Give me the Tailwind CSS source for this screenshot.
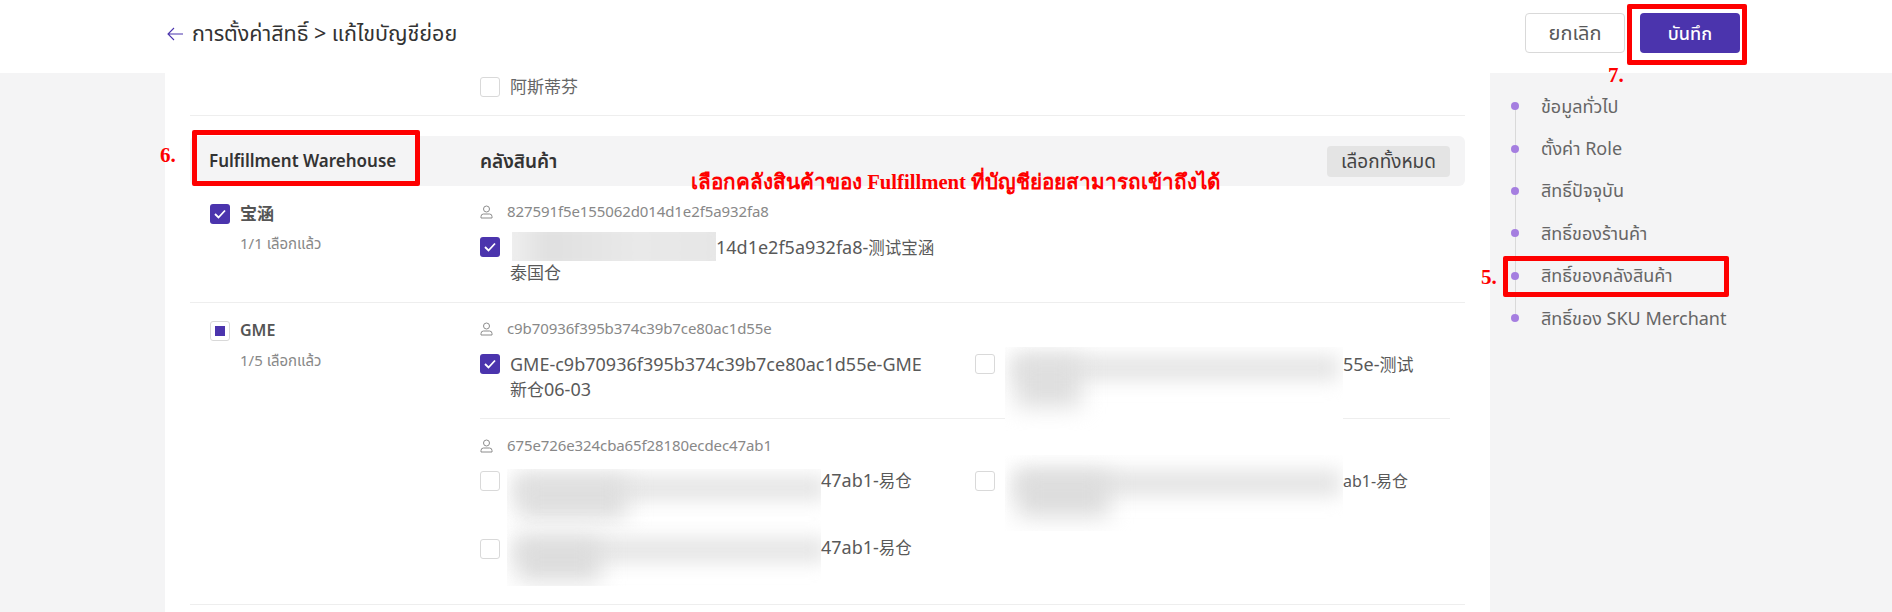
<!DOCTYPE html>
<html lang="th">
<head>
<meta charset="utf-8">
<script src="https://cdn.jsdelivr.net/npm/@tailwindcss/browser@4"></script>
</head>
<body class="[font-family:'Noto_Sans','Noto_Sans_Thai','Noto_Sans_CJK_SC',sans-serif]">
<div class="relative h-[612px] w-[1892px] overflow-hidden bg-[#f4f4f5] text-[#595959]">

  <!-- Header -->
  <header class="flex h-[73px] items-start justify-between bg-white pl-[167px] pr-[152px] pt-[13px]">
    <div class="flex h-[42px] items-center">
      <svg class="h-[14px] w-[16px]" viewBox="0 0 16 14" fill="none" stroke="#4b34ad" stroke-width="1.1"><path d="M16 7H1M7 1 1 7l6 6"/></svg>
      <span class="ml-[9px] -mt-[2px] text-[21.500px] text-[#333]">การตั้งค่าสิทธิ์ &gt; แก้ไขบัญชีย่อย</span>
    </div>
    <div class="flex gap-[15px]">
      <button class="h-[40px] w-[100px] rounded-[4px] border border-[#d9d9d9] bg-white text-[20px] text-[#595959]">ยกเลิก</button>
      <button class="h-[40px] w-[100px] rounded-[4px] bg-[#4b34ad] text-[18px] font-medium text-white">บันทึก</button>
    </div>
  </header>

  <div class="flex">
    <!-- Main column -->
    <main class="ml-[165px] h-[539px] w-[1325px] bg-white px-[25px]">
      <div class="flex h-[43px] items-start border-b border-[#eee] pl-[290px] pt-[4px]">
        <span class="h-[20px] w-[20px] rounded-[3px] border border-[#d9d9d9] bg-white"></span>
        <span class="ml-[10px] text-[17px] leading-[20px] text-[#666]">阿斯蒂芬</span>
      </div>

      <div class="mt-[20px] flex h-[50px] items-center rounded-[6px] bg-[#f4f4f5]">
        <span class="w-[290px] pl-[19px] text-[17px] font-semibold text-[#333]">Fulfillment Warehouse</span>
        <span class="text-[19px] font-semibold text-[#333]">คลังสินค้า</span>
        <button class="ml-auto mr-[15px] h-[31px] w-[123px] rounded-[4px] bg-[#e4e4e4] text-[19px] text-[#444]">เลือกทั้งหมด</button>
      </div>

      <!-- Merchant 1 -->
      <section class="flex h-[117px] border-b border-[#eee]">
        <div class="w-[290px] pl-[20px] pt-[18px]">
          <div class="flex h-[20px] items-center">
            <span class="flex h-[20px] w-[20px] items-center justify-center rounded-[3px] bg-[#4b34ad]">
              <svg class="h-[10px] w-[12px]" viewBox="0 0 12 10" fill="none" stroke="#fff" stroke-width="1.8"><path d="M1 5l3.500 3.500L11 1.500"/></svg>
            </span>
            <span class="ml-[10px] text-[17px] font-semibold text-[#555]">宝涵</span>
          </div>
          <div class="ml-[30px] mt-[9px] text-[15px] leading-[20px] text-[#888]">1/1 เลือกแล้ว</div>
        </div>
        <div class="flex-1 pt-[15px]">
          <div class="flex h-[20px] items-center text-[15px] tracking-[-0.1px] text-[#888]">
            <svg class="mt-[2px] h-[14px] w-[13px]" viewBox="0 0 13 14" fill="none" stroke="#8c8c8c" stroke-width="1"><circle cx="6.500" cy="4" r="3"/><path d="M1 13v-1.500A2.500 2.500 0 0 1 3.500 9h6a2.500 2.500 0 0 1 2.500 2.500V13z"/></svg>
            <span class="ml-[14px]">827591f5e155062d014d1e2f5a932fa8</span>
          </div>
          <div class="mt-[16px] flex items-start">
            <span class="flex h-[20px] w-[20px] shrink-0 items-center justify-center rounded-[3px] bg-[#4b34ad]">
              <svg class="h-[10px] w-[12px]" viewBox="0 0 12 10" fill="none" stroke="#fff" stroke-width="1.8"><path d="M1 5l3.500 3.500L11 1.500"/></svg>
            </span>
            <div class="-mt-[3px] ml-[10px] text-[18px] leading-[26px]">
              <div class="flex">
                <span class="relative w-[206px] overflow-visible"><span class="absolute left-[2px] top-[-2px] h-[29px] w-[204px] overflow-hidden bg-[#e8e8e8]"><span class="absolute left-[-8px] top-[-8px] h-[45px] w-[220px] bg-[linear-gradient(90deg,#f2f2f2,#e0e0e0_20%,#e9e9e9_60%,#e6e6e6)] blur-[7px]"></span></span></span>
                <span>14d1e2f5a932fa8-<span class="text-[16.500px]">测试宝涵</span></span>
              </div>
              <div class="-mt-px text-[17px]">泰国仓</div>
            </div>
          </div>
        </div>
      </section>

      <!-- Merchant 2 -->
      <section class="flex h-[302px] border-b border-[#eee]">
        <div class="w-[290px] pl-[20px] pt-[18px]">
          <div class="flex h-[20px] items-center">
            <span class="flex h-[20px] w-[20px] items-center justify-center rounded-[3px] border border-[#d9d9d9] bg-white">
              <span class="h-[10px] w-[10px] bg-[#4b34ad]"></span>
            </span>
            <span class="ml-[10px] -mt-[2px] text-[16px] font-semibold text-[#555]">GME</span>
          </div>
          <div class="ml-[30px] mt-[9px] text-[15px] leading-[20px] text-[#888]">1/5 เลือกแล้ว</div>
        </div>
        <div class="flex-1 pr-[15px] pt-[15px]">
          <div class="flex h-[20px] items-center text-[15px] tracking-[-0.1px] text-[#888]">
            <svg class="mt-[2px] h-[14px] w-[13px]" viewBox="0 0 13 14" fill="none" stroke="#8c8c8c" stroke-width="1"><circle cx="6.500" cy="4" r="3"/><path d="M1 13v-1.500A2.500 2.500 0 0 1 3.500 9h6a2.500 2.500 0 0 1 2.500 2.500V13z"/></svg>
            <span class="ml-[14px]">c9b70936f395b374c39b7ce80ac1d55e</span>
          </div>
          <div class="mt-[16px] grid h-[65px] grid-cols-[495px_1fr] border-b border-[#eee]">
            <div class="flex items-start">
              <span class="flex h-[20px] w-[20px] shrink-0 items-center justify-center rounded-[3px] bg-[#4b34ad]">
                <svg class="h-[10px] w-[12px]" viewBox="0 0 12 10" fill="none" stroke="#fff" stroke-width="1.8"><path d="M1 5l3.500 3.500L11 1.500"/></svg>
              </span>
              <div class="-mt-[3px] ml-[10px] text-[18px] leading-[26px]">GME-c9b70936f395b374c39b7ce80ac1d55e-GME<div class="-mt-px"><span class="text-[17px]">新仓</span>06-03</div></div>
            </div>
            <div class="flex items-start">
              <span class="h-[20px] w-[20px] shrink-0 rounded-[3px] border border-[#d9d9d9] bg-white"></span>
              <span class="relative ml-[10px] w-[338px]">
                <span class="absolute left-0 top-[-7px] h-[84px] w-[338px] overflow-hidden bg-white">
                  <span class="absolute left-[8px] top-[8px] h-[26px] w-[326px] bg-[#e6e6e6] blur-[9px]"></span>
                  <span class="absolute left-[10px] top-[10px] h-[50px] w-[66px] bg-[#dedede] blur-[11px]"></span>
                </span>
              </span>
              <span class="-mt-[3px] text-[18px] leading-[26px]">55e-<span class="text-[17px]">测试</span></span>
            </div>
          </div>
          <div class="mt-[16px] flex h-[20px] items-center text-[15px] tracking-[-0.1px] text-[#888]">
            <svg class="mt-[2px] h-[14px] w-[13px]" viewBox="0 0 13 14" fill="none" stroke="#8c8c8c" stroke-width="1"><circle cx="6.500" cy="4" r="3"/><path d="M1 13v-1.500A2.500 2.500 0 0 1 3.500 9h6a2.500 2.500 0 0 1 2.500 2.500V13z"/></svg>
            <span class="ml-[14px]">675e726e324cba65f28180ecdec47ab1</span>
          </div>
          <div class="mt-[16px] grid grid-cols-[495px_1fr] grid-rows-[68px_48px]">
            <div class="flex items-start">
              <span class="h-[20px] w-[20px] shrink-0 rounded-[3px] border border-[#d9d9d9] bg-white"></span>
              <span class="relative ml-[7px] w-[314px]">
                <span class="absolute left-0 top-[-2px] h-[117px] w-[314px] overflow-hidden bg-white">
                  <span class="absolute left-[8px] top-[6px] h-[26px] w-[310px] bg-[#e6e6e6] blur-[9px]"></span>
                  <span class="absolute left-[10px] top-[8px] h-[42px] w-[110px] bg-[#dedede] blur-[11px]"></span>
                  <span class="absolute left-[8px] top-[68px] h-[26px] w-[310px] bg-[#e6e6e6] blur-[9px]"></span>
                  <span class="absolute left-[10px] top-[70px] h-[42px] w-[84px] bg-[#dcdcdc] blur-[11px]"></span>
                </span>
              </span>
              <span class="-mt-[4px] text-[18px] leading-[26px]">47ab1-<span class="text-[16.500px]">易仓</span></span>
            </div>
            <div class="flex items-start">
              <span class="h-[20px] w-[20px] shrink-0 rounded-[3px] border border-[#d9d9d9] bg-white"></span>
              <span class="relative ml-[10px] w-[338px]">
                <span class="absolute left-0 top-[-16px] h-[76px] w-[338px] overflow-hidden bg-white">
                  <span class="absolute left-[10px] top-[14px] h-[28px] w-[326px] bg-[#e6e6e6] blur-[9px]"></span>
                  <span class="absolute left-[12px] top-[18px] h-[44px] w-[92px] bg-[#dcdcdc] blur-[11px]"></span>
                </span>
              </span>
              <span class="-mt-[3px] text-[16px] leading-[26px]">ab1-易仓</span>
            </div>
            <div class="flex items-start">
              <span class="h-[20px] w-[20px] shrink-0 rounded-[3px] border border-[#d9d9d9] bg-white"></span>
              <span class="ml-[321px] -mt-[5px] text-[18px] leading-[26px]">47ab1-<span class="text-[16.500px]">易仓</span></span>
            </div>
          </div>
        </div>
      </section>
    </main>

    <!-- Anchor nav -->
    <nav class="ml-[21px] pt-[12px] text-[18px] text-[#666]">
      <ul class="relative flex flex-col">
        <li class="absolute bottom-[21px] left-[3.500px] top-[21px] w-px bg-[#d9d9d9]"></li>
        <li class="relative flex h-[42.400px] items-center"><span class="h-[8px] w-[8px] rounded-full bg-[#a57ee0]"></span><span class="ml-[22px]">ข้อมูลทั่วไป</span></li>
        <li class="relative flex h-[42.400px] items-center"><span class="h-[8px] w-[8px] rounded-full bg-[#a57ee0]"></span><span class="ml-[22px]">ตั้งค่า Role</span></li>
        <li class="relative flex h-[42.400px] items-center"><span class="h-[8px] w-[8px] rounded-full bg-[#a57ee0]"></span><span class="ml-[22px]">สิทธิ์ปัจจุบัน</span></li>
        <li class="relative flex h-[42.400px] items-center"><span class="h-[8px] w-[8px] rounded-full bg-[#a57ee0]"></span><span class="ml-[22px]">สิทธิ์ของร้านค้า</span></li>
        <li class="relative flex h-[42.400px] items-center"><span class="h-[8px] w-[8px] rounded-full bg-[#a57ee0]"></span><span class="ml-[22px]">สิทธิ์ของคลังสินค้า</span></li>
        <li class="relative flex h-[42.400px] items-center"><span class="h-[8px] w-[8px] rounded-full bg-[#a57ee0]"></span><span class="ml-[22px]">สิทธิ์ของ SKU Merchant</span></li>
      </ul>
    </nav>
  </div>

  <!-- Red annotations laid over the screenshot -->
  <div class="absolute left-[192px] top-[130px] h-[56px] w-[228px] rounded-[2px] border-[5px] border-[#fe0000]"></div>
  <div class="absolute left-[1627px] top-[4px] h-[61px] w-[120px] rounded-[2px] border-[5px] border-[#fe0000]"></div>
  <div class="absolute left-[1503px] top-[256px] h-[41px] w-[226px] rounded-[2px] border-[5px] border-[#fe0000]"></div>
  <span class="absolute left-[160px] top-[143px] text-[21px] font-bold leading-[24px] text-[#fe0000] [font-family:'Liberation_Serif',serif]">6.</span>
  <span class="absolute left-[1608px] top-[63px] text-[21px] font-bold leading-[24px] text-[#fe0000] [font-family:'Liberation_Serif',serif]">7.</span>
  <span class="absolute left-[1481px] top-[265px] text-[21px] font-bold leading-[24px] text-[#fe0000] [font-family:'Liberation_Serif',serif]">5.</span>
  <span class="absolute left-[691px] top-[168px] whitespace-nowrap text-[20.700px] font-bold leading-[28px] text-[#fe0000] [font-family:'Liberation_Serif',serif]">เลือกคลังสินค้าของ Fulfillment ที่บัญชีย่อยสามารถเข้าถึงได้</span>
</div>
</body>
</html>
